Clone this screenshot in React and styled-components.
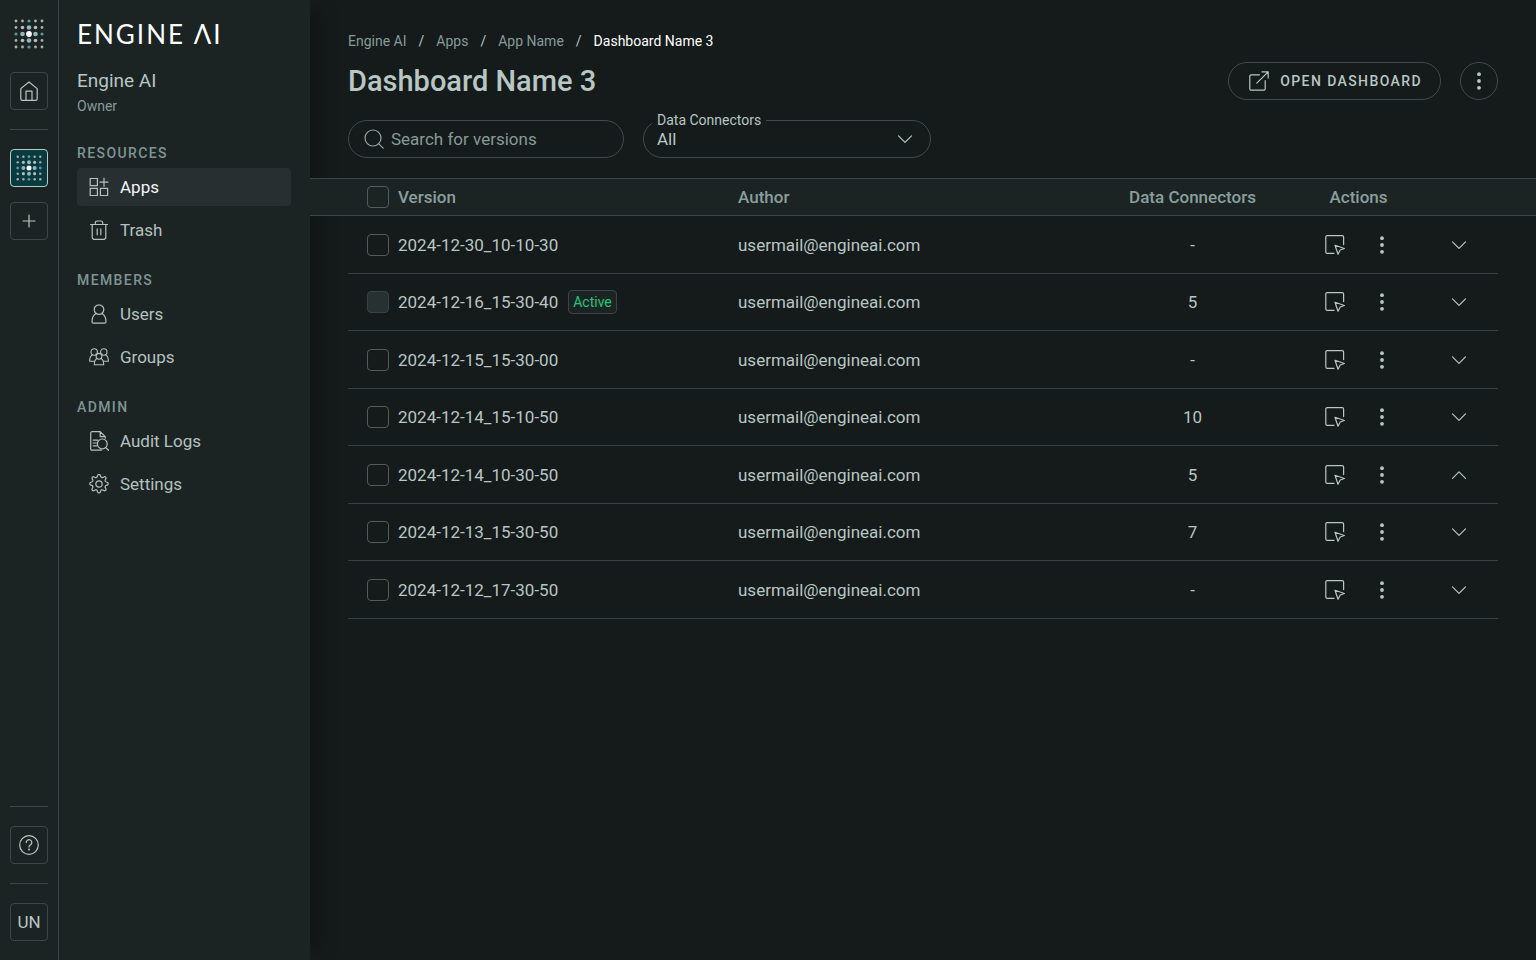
import React, { useState } from "react";
import styled, { createGlobalStyle } from "styled-components";

const GlobalStyle = createGlobalStyle`
  * {
    box-sizing: border-box;
  }
  body {
    margin: 0;
    background: #151a1a;
    color: #b8c6c4;
    font-family: Roboto, "Liberation Sans", sans-serif;
    font-size: 17px;
  }
  button, input, select {
    font-family: inherit;
    color: inherit;
  }
  button {
    cursor: pointer;
  }
`;

const Layout = styled.div`
  display: flex;
  min-height: 100vh;
`;

const Rail = styled.nav`
  display: flex;
  flex-direction: column;
  align-items: center;
  flex: none;
  width: 59px;
  padding: 19px 10px;
  background: #1c2323;
  border-right: 1px solid #3a4545;
  svg {
    display: block;
  }
`;

const RailButton = styled.button`
  display: flex;
  align-items: center;
  justify-content: center;
  width: 38px;
  height: 38px;
  padding: 0;
  background: ${props => (props.$active ? "#083a40" : "transparent")};
  border: 1px solid ${props => (props.$active ? "#b4c8c6" : "#3b4747")};
  border-radius: 4px;
  font-size: 17px;
`;

const RailGroup = styled.div`
  display: flex;
  flex-direction: column;
  gap: 15px;
`;

const RailDivider = styled.hr`
  width: 100%;
  height: 1px;
  margin: 19px 0;
  border: 0;
  background: #3b4747;
`;

const RailTop = styled.div`
  flex: 1;
  display: flex;
  flex-direction: column;
  align-items: center;
  > svg {
    margin-bottom: 23px;
  }
`;

const Sidebar = styled.aside`
  flex: none;
  width: 251px;
  padding: 18px 19px 18px 18px;
  background: #1c2323;
  box-shadow: 20px 0 20px -10px rgba(0, 0, 0, 0.2);
`;

const Wordmark = styled.div`
  color: #ffffff;
  font-family: Lato, sans-serif;
  font-size: 26px;
  font-weight: 400;
  line-height: 32px;
  letter-spacing: 2px;
`;

const Workspace = styled.div`
  margin-top: 19px;
  font-size: 19px;
  line-height: 24px;
`;

const Role = styled.div`
  margin-top: 4px;
  color: #869b99;
  font-size: 14px;
  line-height: 18px;
`;

const NavSection = styled.section`
  margin-top: 28px;
  & + & {
    margin-top: 21px;
  }
  h2 {
    margin: 0 0 5px;
    color: #7f9594;
    font-size: 14px;
    font-weight: 500;
    line-height: 20px;
    letter-spacing: 0.1em;
  }
`;

const NavList = styled.ul`
  display: flex;
  flex-direction: column;
  gap: 5px;
  margin: 0;
  padding: 0;
  list-style: none;
`;

const NavLink = styled.a`
  display: flex;
  align-items: center;
  gap: 11px;
  height: 38px;
  padding: 0 12px;
  border-radius: 4px;
  background: ${props => (props.$active ? "#272f31" : "transparent")};
  color: ${props => (props.$active ? "#f2f6f5" : "#b4c1bf")};
  text-decoration: none;
  svg {
    color: #b4c1bf;
  }
`;

const Main = styled.main`
  flex: 1;
  min-width: 0;
  padding-top: 32px;
`;

const Breadcrumbs = styled.nav`
  display: flex;
  gap: 12px;
  padding: 0 38px;
  font-size: 14px;
  line-height: 18px;
  a {
    color: #869b99;
    text-decoration: none;
  }
  a[aria-current] {
    color: #ffffff;
  }
`;

const TitleBar = styled.header`
  display: flex;
  align-items: center;
  gap: 19px;
  margin-top: 12px;
  padding: 0 38px;
  h1 {
    flex: 1;
    margin: 0;
    font-size: 29px;
    font-weight: 500;
    line-height: 38px;
  }
`;

const OutlineButton = styled.button`
  display: flex;
  align-items: center;
  gap: 11px;
  height: 38px;
  padding: 0 18px 0 20px;
  background: transparent;
  border: 1px solid #3f4b4b;
  border-radius: 19px;
  font-size: 14px;
  font-weight: 500;
  letter-spacing: 0.1em;
`;

const RoundButton = styled(OutlineButton)`
  justify-content: center;
  width: 38px;
  padding: 0;
`;

const Filters = styled.div`
  display: flex;
  gap: 19px;
  margin: 20px 0;
  padding: 0 38px;
`;

const SearchField = styled.label`
  display: flex;
  align-items: center;
  gap: 7px;
  width: 276px;
  height: 38px;
  padding: 0 15px;
  border: 1px solid #3f4b4b;
  border-radius: 19px;
  svg {
    flex: none;
    color: #93a6a4;
  }
  input {
    flex: 1;
    min-width: 0;
    padding: 0;
    background: none;
    border: 0;
    outline: 0;
    font-size: 17px;
  }
  input::placeholder {
    color: #869b99;
    opacity: 1;
  }
`;

const SelectField = styled.div`
  position: relative;
  width: 288px;
  height: 38px;
  label {
    position: absolute;
    top: -9px;
    left: 9px;
    padding: 0 5px;
    background: #151a1a;
    font-size: 14px;
    line-height: 18px;
  }
  select {
    width: 100%;
    height: 100%;
    padding: 0 13px;
    appearance: none;
    background: transparent;
    border: 1px solid #3f4b4b;
    border-radius: 19px;
    font-size: 17px;
  }
  svg {
    position: absolute;
    top: 9px;
    right: 16px;
    pointer-events: none;
  }
`;

const Table = styled.table`
  width: 100%;
  table-layout: fixed;
  border-collapse: separate;
  border-spacing: 0;
  th, td {
    padding: 0;
    text-align: left;
    white-space: nowrap;
  }
  th {
    height: 38px;
    background: #1c2323;
    border-top: 1px solid #3a4646;
    border-bottom: 1px solid #3a4646;
    color: #8a9f9d;
    font-weight: 500;
  }
  td {
    border-bottom: 1px solid #364141;
  }
`;

const Col = styled.col`
  width: ${props => (props.$width ? `${props.$width}px` : "auto")};
`;

const Row = styled.tr`
  height: 58px;
  &:nth-child(even) {
    height: 57px;
  }
`;

const Gutter = styled.td`
  && {
    border-bottom: 0;
  }
`;

const Centered = styled.div`
  display: flex;
  align-items: center;
  justify-content: center;
  gap: ${props => props.$gap || 0}px;
`;

const CheckBox = styled.input.attrs({ type: "checkbox" })`
  display: block;
  width: 22px;
  height: 22px;
  margin: 0 0 0 19px;
  appearance: none;
  border: 1px solid #4d5d5b;
  border-radius: 4px;
  &:checked {
    background: #7f9594;
  }
  &:disabled {
    background: #283132;
    border-color: #364243;
  }
`;

const VersionCell = styled.div`
  display: flex;
  align-items: center;
  gap: 10px;
`;

const Badge = styled.span`
  padding: 0 4px;
  background: #1c2323;
  border: 1px solid #3a4646;
  border-radius: 4px;
  color: #1fc77c;
  font-size: 14px;
  line-height: 22px;
`;

const IconButton = styled.button`
  display: flex;
  align-items: center;
  justify-content: center;
  width: 28px;
  height: 28px;
  padding: 0;
  background: none;
  border: 0;
`;

const Icon = ({ children, size = 20, ...rest }) => (
  <svg
    width={size}
    height={size}
    viewBox="0 0 20 20"
    fill="none"
    stroke="currentColor"
    strokeWidth="1.2"
    strokeLinecap="round"
    strokeLinejoin="round"
    aria-hidden="true"
    {...rest}
  >
    {children}
  </svg>
);

const HomeIcon = () => (
  <Icon>
    <path d="M1.800 7.600 10 1l8.200 6.600v10.200a1.600 1.600 0 0 1-1.600 1.600H3.400a1.600 1.600 0 0 1-1.600-1.600zM7 19.200v-9h6v9" />
  </Icon>
);

const PlusIcon = () => (
  <Icon>
    <path d="M10 4v12M4 10h12" />
  </Icon>
);

const HelpIcon = () => (
  <Icon>
    <circle cx="10" cy="10" r="9.300" />
    <path d="M7.200 7.600a2.800 2.800 0 1 1 4.400 2.200c-1 .700-1.600 1.100-1.600 2.300" />
    <circle cx="10" cy="14.500" r=".6" fill="currentColor" stroke="none" />
    <circle cx="10" cy="14.500" r=".4" />
  </Icon>
);

const AppsIcon = () => (
  <Icon strokeLinejoin="miter">
    <path d="M1.200 1.500h7.200v7.200H1.200zM1.200 11.300h7.200v7.200H1.200zM11.400 11.300h7.200v7.200h-7.200zM15 1.200v8M11 5.200h8" />
  </Icon>
);

const TrashIcon = () => (
  <Icon>
    <path d="M1.500 4.500h17M3.200 4.500v12.800a2 2 0 0 0 2 2h9.600a2 2 0 0 0 2-2V4.500M6.300 4.500V2.700A1.700 1.700 0 0 1 8 1h4a1.700 1.700 0 0 1 1.700 1.700v1.800M8.200 8.800v6M11.800 8.800v6" />
  </Icon>
);

const UserIcon = () => (
  <Icon>
    <circle cx="10" cy="5.600" r="4.800" />
    <path d="M7 9.400c-2.500 1.500-4 4.500-4 8.300 0 .900.600 1.500 1.500 1.500h11c.900 0 1.500-.600 1.500-1.500 0-3.800-1.500-6.800-4-8.300" />
  </Icon>
);

const GroupsIcon = () => (
  <Icon strokeWidth="1.1">
    <circle cx="5.200" cy="5" r="3.200" />
    <circle cx="14.800" cy="5" r="3.200" />
    <circle cx="10" cy="9.300" r="2.900" />
    <path d="M3.300 7.700C1.600 8.800.6 11 .6 14.300h4.800M16.700 7.700c1.700 1.100 2.700 3.300 2.700 6.600h-4.800M8 11.500c-2 1-2.700 3.300-2.700 6.300h9.400c0-3-.700-5.300-2.700-6.300M7.500 7.500l-.6-.4M12.500 7.500l.6-.4" />
  </Icon>
);

const AuditIcon = () => (
  <Icon>
    <path d="M12.500 19.200H3a1.300 1.300 0 0 1-1.300-1.300V2A1.300 1.300 0 0 1 3 .700h8.200l5 5v1.500M11.200.700v5h5M4.200 9.200h4.500M4.200 12h3.300M4.200 14.800h3.500M16.800 16.800l3 2.700" />
    <circle cx="13.300" cy="12.900" r="4.900" />
  </Icon>
);

const SettingsIcon = () => (
  <Icon>
    <circle cx="10" cy="10" r="3.200" />
    <path d="M8.600 1.500a1.450 1.450 0 0 1 2.800 0l.300 1a1.500 1.500 0 0 0 2.200.900l.900-.500a1.450 1.450 0 0 1 2 2l-.500.900a1.500 1.500 0 0 0 .9 2.200l1 .300a1.450 1.450 0 0 1 0 2.800l-1 .300a1.500 1.500 0 0 0-.900 2.200l.500.900a1.450 1.450 0 0 1-2 2l-.900-.500a1.500 1.500 0 0 0-2.200.900l-.300 1a1.450 1.450 0 0 1-2.800 0l-.300-1a1.500 1.500 0 0 0-2.200-.900l-.900.500a1.450 1.450 0 0 1-2-2l.500-.900a1.500 1.500 0 0 0-.900-2.200l-1-.300a1.450 1.450 0 0 1 0-2.800l1-.300a1.500 1.500 0 0 0 .9-2.200l-.500-.900a1.450 1.450 0 0 1 2-2l.9.500a1.500 1.500 0 0 0 2.200-.900z" />
  </Icon>
);

const SearchIcon = () => (
  <Icon>
    <circle cx="9" cy="9" r="8" />
    <path d="M14.800 14.800l4.400 4.400" />
  </Icon>
);

const OpenIcon = () => (
  <Icon>
    <path d="M10.500 3.800H2.300A1.500 1.500 0 0 0 .800 5.300v12.400a1.500 1.500 0 0 0 1.500 1.500h12.400a1.500 1.500 0 0 0 1.500-1.500V9.500M13 .800h6.200V7M19.200.800 7.800 12.200" />
  </Icon>
);

const RunIcon = () => (
  <Icon>
    <path d="M9 18.400H2.200A1.400 1.400 0 0 1 .800 17V2A1.400 1.400 0 0 1 2.200.600h15A1.400 1.400 0 0 1 18.600 2v7.600M10 10.200l9.400 3.300-4.200 1.500-2.200 4.300z" />
  </Icon>
);

const DotsIcon = () => (
  <Icon fill="currentColor" stroke="none">
    <circle cx="10" cy="3.200" r="1.900" />
    <circle cx="10" cy="10" r="1.900" />
    <circle cx="10" cy="16.800" r="1.900" />
  </Icon>
);

const ChevronIcon = ({ up }) => (
  <Icon>
    <path d={up ? "M3.500 13.300 10 6.800l6.500 6.500" : "M3.500 6.800 10 13.300l6.500-6.500"} />
  </Icon>
);

// 5x5 dot grid, dots grow and brighten towards the middle
const DOTS = [0, 1, 2, 3, 4].flatMap(y => [0, 1, 2, 3, 4].map(x => ({ x, y })));

const LogoMark = ({ size }) => (
  <svg width={size} height={size} viewBox="0 0 30 30" aria-hidden="true">
    {DOTS.map(({ x, y }) => {
      const dx = Math.abs(x - 2);
      const dy = Math.abs(y - 2);
      let r = 1.4;
      let fill = "#a9b0b0";
      if (dx + dy === 0) {
        r = 2.9;
        fill = "#ffffff";
      } else if (dx + dy === 1) {
        r = 2.3;
        fill = "#8fb9bd";
      } else if (dx === 1 && dy === 1) {
        r = 1.8;
        fill = "#b5bcbc";
      } else if (dx === 0 || dy === 0) {
        r = 1.6;
        fill = "#62969c";
      }
      return <circle key={`${x}${y}`} cx={2 + x * 6.5} cy={2 + y * 6.5} r={r} fill={fill} />;
    })}
  </svg>
);

const sections = [
  {
    title: "RESOURCES",
    items: [
      { name: "Apps", icon: AppsIcon, active: true },
      { name: "Trash", icon: TrashIcon }
    ]
  },
  {
    title: "MEMBERS",
    items: [
      { name: "Users", icon: UserIcon },
      { name: "Groups", icon: GroupsIcon }
    ]
  },
  {
    title: "ADMIN",
    items: [
      { name: "Audit Logs", icon: AuditIcon },
      { name: "Settings", icon: SettingsIcon }
    ]
  }
];

const versions = [
  { name: "2024-12-30_10-10-30", connectors: "-" },
  { name: "2024-12-16_15-30-40", connectors: "5", active: true },
  { name: "2024-12-15_15-30-00", connectors: "-" },
  { name: "2024-12-14_15-10-50", connectors: "10" },
  { name: "2024-12-14_10-30-50", connectors: "5", open: true },
  { name: "2024-12-13_15-30-50", connectors: "7" },
  { name: "2024-12-12_17-30-50", connectors: "-" }
];

const VersionRow = ({ version }) => {
  const [open, setOpen] = useState(Boolean(version.open));

  return (
    <Row>
      <Gutter />
      <td>
        <CheckBox aria-label={`Select ${version.name}`} disabled={version.active} />
      </td>
      <td>
        <VersionCell>
          {version.name}
          {version.active && <Badge>Active</Badge>}
        </VersionCell>
      </td>
      <td>usermail@engineai.com</td>
      <td>
        <Centered>{version.connectors}</Centered>
      </td>
      <td>
        <Centered $gap={19}>
          <IconButton aria-label="Run version"><RunIcon /></IconButton>
          <IconButton aria-label="More actions"><DotsIcon /></IconButton>
        </Centered>
      </td>
      <td>
        <Centered>
          <IconButton aria-label="Toggle details" aria-expanded={open} onClick={() => setOpen(!open)}>
            <ChevronIcon up={open} />
          </IconButton>
        </Centered>
      </td>
      <Gutter />
    </Row>
  );
};

const App = () => (
  <>
    <GlobalStyle />
    <Layout>
      <Rail>
        <RailTop>
          <LogoMark size={30} />
          <RailButton aria-label="Home"><HomeIcon /></RailButton>
          <RailDivider />
          <RailGroup>
            <RailButton $active aria-label="Engine AI"><LogoMark size={26} /></RailButton>
            <RailButton aria-label="Add workspace"><PlusIcon /></RailButton>
          </RailGroup>
        </RailTop>
        <RailDivider />
        <RailButton aria-label="Help"><HelpIcon /></RailButton>
        <RailDivider />
        <RailButton>UN</RailButton>
      </Rail>
      <Sidebar>
        <Wordmark aria-label="Engine AI">ENGINE ΛI</Wordmark>
        <Workspace>Engine AI</Workspace>
        <Role>Owner</Role>
        {sections.map(section => (
          <NavSection key={section.title}>
            <h2>{section.title}</h2>
            <NavList>
              {section.items.map(({ name, icon: ItemIcon, active }) => (
                <li key={name}>
                  <NavLink href="#" $active={active}>
                    <ItemIcon />
                    {name}
                  </NavLink>
                </li>
              ))}
            </NavList>
          </NavSection>
        ))}
      </Sidebar>
      <Main>
        <Breadcrumbs aria-label="Breadcrumb">
          <a href="#">Engine AI</a>
          <span>/</span>
          <a href="#">Apps</a>
          <span>/</span>
          <a href="#">App Name</a>
          <span>/</span>
          <a href="#" aria-current="page">Dashboard Name 3</a>
        </Breadcrumbs>
        <TitleBar>
          <h1>Dashboard Name 3</h1>
          <OutlineButton>
            <OpenIcon />
            OPEN DASHBOARD
          </OutlineButton>
          <RoundButton aria-label="Dashboard actions"><DotsIcon /></RoundButton>
        </TitleBar>
        <Filters>
          <SearchField>
            <SearchIcon />
            <input type="text" aria-label="Search for versions" placeholder="Search for versions" />
          </SearchField>
          <SelectField>
            <select id="connectors">
              <option>All</option>
            </select>
            <label htmlFor="connectors">Data Connectors</label>
            <ChevronIcon />
          </SelectField>
        </Filters>
        <Table>
          <colgroup>
            <Col $width={38} />
            <Col $width={50} />
            <Col $width={340} />
            <Col />
            <Col $width={209} />
            <Col $width={123} />
            <Col $width={78} />
            <Col $width={38} />
          </colgroup>
          <thead>
            <tr>
              <th />
              <th><CheckBox aria-label="Select all versions" /></th>
              <th>Version</th>
              <th>Author</th>
              <th><Centered>Data Connectors</Centered></th>
              <th><Centered>Actions</Centered></th>
              <th />
              <th />
            </tr>
          </thead>
          <tbody>
            {versions.map(version => (
              <VersionRow key={version.name} version={version} />
            ))}
          </tbody>
        </Table>
      </Main>
    </Layout>
  </>
);

export default App;
